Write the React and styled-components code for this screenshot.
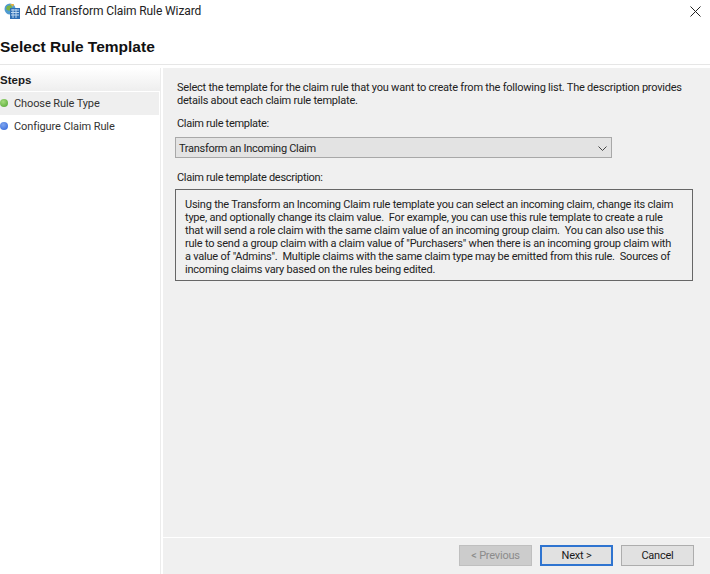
import React from "react";
import styled, { createGlobalStyle } from "styled-components";

const GlobalStyle = createGlobalStyle`
  html, body {
    margin: 0;
    padding: 0;
    background: #ffffff;
  }
  body {
    font-family: Roboto, "Liberation Sans", Arial, sans-serif;
    font-size: 11px;
    letter-spacing: -0.22px;
    color: #1a1a1a;
  }
`;

const Wizard = styled.div`
  width: 710px;
  height: 574px;
  display: flex;
  flex-direction: column;
  overflow: hidden;
  background: #fff;
`;

const TitleBar = styled.div`
  height: 22px;
  display: flex;
  align-items: center;
  padding: 0 9px 0 4px;
  gap: 4px;
`;

const TitleText = styled.div`
  flex: 1;
  font-size: 12px;
  letter-spacing: -0.1px;
  color: #222;
`;

const Heading = styled.h1`
  margin: 0;
  height: 43px;
  box-sizing: border-box;
  padding-top: 17px;
  font-family: "Liberation Sans", Arial, sans-serif;
  font-size: 15.5px;
  letter-spacing: 0;
  line-height: 16px;
  font-weight: bold;
  color: #111;
  border-bottom: 1px solid #e6e6e6;
`;

const Body = styled.div`
  flex: 1;
  display: flex;
  min-height: 0;
  padding-top: 3px;
`;

const Sidebar = styled.div`
  width: 160px;
  flex-shrink: 0;
  border-right: 1px solid #ececec;
`;

const StepsHeader = styled.div`
  height: 23px;
  box-sizing: border-box;
  padding-top: 5px;
  font-family: "Liberation Sans", Arial, sans-serif;
  font-weight: bold;
  font-size: 11.5px;
  letter-spacing: 0;
  line-height: 14px;
  color: #1a1a1a;
  background: linear-gradient(#ffffff, #eeeeee);
`;

const Step = styled.div`
  height: 23px;
  box-sizing: border-box;
  padding-bottom: 1px;
  margin-top: ${(p) => (p.$first ? "1px" : "0")};
  width: 159px;
  display: flex;
  align-items: center;
  gap: 6px;
  background: ${(p) => (p.$active ? "#efefef" : "#fff")};
  color: #333;
  letter-spacing: -0.1px;
`;

const Dot = styled.span`
  width: 8px;
  height: 8px;
  border-radius: 50%;
  background: radial-gradient(circle at 40% 35%, ${(p) => p.$light}, ${(p) => p.$color});
`;

const Main = styled.div`
  flex: 1;
  min-width: 0;
  margin-left: 2px;
  display: flex;
  flex-direction: column;
  background: #f0f0f0;
`;

const Content = styled.div`
  flex: 1;
  padding: 13px 17px 0 12px;
  color: #222;
`;

const Intro = styled.p`
  margin: 0 0 0 2px;
  line-height: 13px;
  white-space: pre;
`;

const FieldLabel = styled.div`
  margin: ${(p) => p.$top}px 0 0 2px;
  line-height: 14px;
  letter-spacing: -0.3px;
`;

const Select = styled.div`
  margin-top: 6px;
  width: 437px;
  height: 21px;
  box-sizing: border-box;
  border: 1px solid #a8a8a8;
  background: #e3e3e3;
  display: flex;
  align-items: center;
  justify-content: space-between;
  padding: 1px 4px 0 3px;
  letter-spacing: -0.3px;
`;

const Description = styled.div`
  margin-top: 4px;
  width: 518px;
  height: 92px;
  box-sizing: border-box;
  border: 1px solid #666;
  padding: 8px 8px 0 9px;
  line-height: 13px;
  white-space: pre;
`;

const Footer = styled.div`
  height: 37px;
  box-sizing: border-box;
  border-top: 1px solid #fff;
  display: flex;
  justify-content: flex-end;
  gap: 8px;
  padding: 7px 16px 0 0;
`;

const Button = styled.button`
  width: 73px;
  height: 21px;
  box-sizing: border-box;
  padding: 0;
  font: inherit;
  letter-spacing: inherit;
  color: ${(p) => (p.disabled ? "#8b8b8b" : "#1a1a1a")};
  background: ${(p) => (p.disabled ? "#cccccc" : "#e1e1e1")};
  border: ${(p) => (p.$primary ? "2px solid #2f74d0" : "1px solid #adadad")};
  border-color: ${(p) => (p.disabled ? "#bfbfbf" : "")};
`;

const WizardIcon = () => (
  <svg width="17" height="17" viewBox="0 0 17 17">
    <circle cx="6" cy="6" r="5.5" fill="#4f9bd0" />
    <path d="M3 3 L7 2 L8 5 L5 8 L2 6 Z" fill="#7cb342" />
    <path d="M6 1 L10 1 L9 4 Z" fill="#e8b23a" />
    <rect x="6" y="5" width="10" height="11" fill="#2f6fb5" />
    <path d="M7 7 H15 M7 9.5 H15 M7 12 H15 M9 6 V15 M12 6 V15" stroke="#bcd7f0" strokeWidth="1" />
  </svg>
);

const CloseIcon = () => (
  <svg width="11" height="11" viewBox="0 0 11 11">
    <path d="M0.5 0.5 L10.5 10.5 M10.5 0.5 L0.5 10.5" stroke="#222" strokeWidth="1" fill="none" />
  </svg>
);

const Chevron = () => (
  <svg width="9" height="5" viewBox="0 0 9 5">
    <path d="M0.5 0.5 L4.5 4.5 L8.5 0.5" stroke="#444" strokeWidth="1" fill="none" />
  </svg>
);

const intro =
  "Select the template for the claim rule that you want to create from the following list. The description provides\ndetails about each claim rule template.";

const description =
  'Using the Transform an Incoming Claim rule template you can select an incoming claim, change its claim\ntype, and optionally change its claim value.  For example, you can use this rule template to create a rule\nthat will send a role claim with the same claim value of an incoming group claim.  You can also use this\nrule to send a group claim with a claim value of "Purchasers" when there is an incoming group claim with\na value of "Admins".  Multiple claims with the same claim type may be emitted from this rule.  Sources of\nincoming claims vary based on the rules being edited.';

export default function App() {
  return (
    <Wizard>
      <GlobalStyle />
      <TitleBar>
        <WizardIcon />
        <TitleText>Add Transform Claim Rule Wizard</TitleText>
        <CloseIcon />
      </TitleBar>
      <Heading>Select Rule Template</Heading>
      <Body>
        <Sidebar>
          <StepsHeader>Steps</StepsHeader>
          <Step $first $active>
            <Dot $color="#4da32f" $light="#a5dc7c" />
            Choose Rule Type
          </Step>
          <Step>
            <Dot $color="#2d62d8" $light="#7fa6f0" />
            Configure Claim Rule
          </Step>
        </Sidebar>
        <Main>
          <Content>
            <Intro>{intro}</Intro>
            <FieldLabel $top={10}>Claim rule template:</FieldLabel>
            <Select>
              Transform an Incoming Claim
              <Chevron />
            </Select>
            <FieldLabel $top={13}>Claim rule template description:</FieldLabel>
            <Description>{description}</Description>
          </Content>
          <Footer>
            <Button disabled>&lt; Previous</Button>
            <Button $primary>Next &gt;</Button>
            <Button>Cancel</Button>
          </Footer>
        </Main>
      </Body>
    </Wizard>
  );
}
